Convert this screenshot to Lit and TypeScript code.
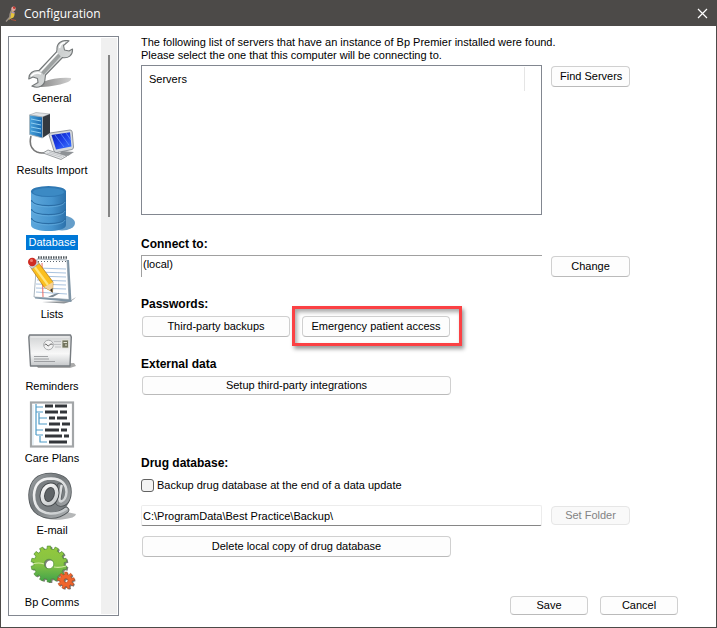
import { LitElement, html, css, svg, TemplateResult } from "lit";
import { customElement, state } from "lit/decorators.js";

function gearPath(cx: number, cy: number, outer: number, inner: number, teeth: number, hole: number): string {
  const step = (Math.PI * 2) / teeth;
  const at = (r: number, a: number) => `${(cx + r * Math.cos(a)).toFixed(2)} ${(cy + r * Math.sin(a)).toFixed(2)}`;
  let d = "";
  for (let i = 0; i < teeth; i++) {
    const a = i * step - Math.PI / 2;
    d += `${i ? "L" : "M"}${at(inner, a - step * 0.28)}L${at(outer, a - step * 0.22)}L${at(outer, a + step * 0.22)}L${at(inner, a + step * 0.28)}`;
  }
  return `${d}ZM${cx - hole} ${cy}a${hole} ${hole} 0 1 0 ${hole * 2} 0a${hole} ${hole} 0 1 0 ${-hole * 2} 0Z`;
}

const wrench = svg`
  <defs>
    <linearGradient id="w" x1="0" y1="0" x2="1" y2="1">
      <stop offset="0" stop-color="#f4f5f5"/><stop offset=".5" stop-color="#cdd0d0"/><stop offset="1" stop-color="#eceeee"/>
    </linearGradient>
    <linearGradient id="ws" x1="0" y1="0" x2="1" y2="0">
      <stop offset="0" stop-color="#777"/><stop offset="1" stop-color="#cfcfcf"/>
    </linearGradient>
  </defs>
  <path d="M3 47L15 42Q28 37 43 38Q44 41 37 43Q28 46 14 47Z" fill="url(#ws)"/>
  <path d="M41 .8C34 -.5 28.500 3 29 9.500L28.500 12L11 30.500C5 30 .5 33.500 .8 39L5 37L9.500 38.500L10 42.500L4 46C10 49 17 46 17 39L17.500 35L34.500 17.500C40 18.500 45 15.500 44.500 9L41 11L36.500 10L35.500 5.500Z" fill="url(#w)" stroke="#75797a" stroke-width="1.100" stroke-linejoin="round"/>
  <path d="M14.500 33.500L31.500 15" stroke="#9da1a1" stroke-width="3.500"/>
  <path d="M12.500 31.500L29.500 13" stroke="#fff" stroke-width="1.200"/>
  <path d="M3 36Q8 31 13 34M31.500 8Q32.500 3 37 2.500" stroke="#fff" stroke-width="1.500" fill="none"/>`;

const network = svg`
  <defs>
    <linearGradient id="scr" x1="0" y1="0" x2="1" y2="1">
      <stop offset="0" stop-color="#0a1fb0"/><stop offset=".5" stop-color="#1c3ee8"/><stop offset="1" stop-color="#3f7bff"/>
    </linearGradient>
    <linearGradient id="twr" x1="0" y1="0" x2="1" y2="0">
      <stop offset="0" stop-color="#4aa3dc"/><stop offset="1" stop-color="#1566ad"/>
    </linearGradient>
  </defs>
  <path d="M3 24Q0 36 9 40Q14 42 19 40" fill="none" stroke="#777" stroke-width="1.600"/>
  <path d="M1.500 3L8 .5L22 2L14.500 5Z" fill="#dfe3e6" stroke="#8a9096" stroke-width=".5"/>
  <path d="M14.500 5L22 2V21L14.500 26Z" fill="#34393f"/>
  <path d="M1.500 3L14.500 5V26L1.500 22.500Z" fill="url(#twr)" stroke="#aab2b8" stroke-width=".8"/>
  <path d="M3 7L13 9M3 11L13 13M3 15L13 17M3 19L13 21" stroke="#8fcdf0" stroke-width="1"/>
  <path d="M34 39L46 40L40 44L31 42Z" fill="#8e9296"/>
  <path d="M22 21L42 18Q44 18 44.200 20L45.500 35Q45.500 37 44 37.500L29 40.500Q27 41 26 39L21 23Q21 21.500 22 21Z" fill="#d5d9dc" stroke="#7c8288" stroke-width=".8"/>
  <path d="M23.500 23L42 20.200L43.500 34.500L28 37.500Z" fill="url(#scr)"/>
  <path d="M27 23L36 35M33 22L41 33M38 21L43 28" stroke="#6f9bff" stroke-width=".7"/>
  <path d="M15 41L20 38L39 44L33 47.500Z" fill="#e8eaeb" stroke="#85898d" stroke-width=".8"/>
  <path d="M19 41L34 45.500M21 40L36 44.500" stroke="#a9adb1" stroke-width=".6"/>`;

const database = svg`
  <defs>
    <linearGradient id="cyl" x1="0" y1="0" x2="1" y2="0">
      <stop offset="0" stop-color="#5ea8dc"/><stop offset=".6" stop-color="#4593cd"/><stop offset="1" stop-color="#2c71ab"/>
    </linearGradient>
  </defs>
  <ellipse cx="34" cy="39" rx="13" ry="7.500" fill="#3f86bd" opacity=".8"/>
  <path d="M3 7V41C3 49 38 49 38 41V7Z" fill="url(#cyl)"/>
  <ellipse cx="20.500" cy="7.500" rx="17.500" ry="5.500" fill="#2f78b3"/>
  <ellipse cx="20.500" cy="8" rx="15.500" ry="4" fill="#3c8ac4"/>
  <path d="M3.500 16C4 23.500 37 23.500 37.500 16M3.500 25C4 32.500 37 32.500 37.500 25M3.500 34C4 41.500 37 41.500 37.500 34" fill="none" stroke="#2a6da5" stroke-width="1.200"/>
  <path d="M4 18C6 24.500 35 24.500 37 18M4 27C6 33.500 35 33.500 37 27M4 36C6 42.500 35 42.500 37 36" fill="none" stroke="#6db3e2" stroke-width=".6"/>`;

const notepad = svg`
  <path d="M14 46L42 45L48 41Q44 46 36 47.500Z" fill="#8f9498"/>
  <path d="M10 3L41 4L43.500 46L7 42.500Z" fill="#7f95a6"/>
  <path d="M9 3L39 4L41 43.500L6 41Z" fill="#fff" stroke="#8797a3" stroke-width=".7"/>
  <path d="M10 12L38 13M10 16L38 17M9 20L38 21M9 24L38 25M8 28L38 29M8 32L38 33M8 36L39 38" stroke="#a9c3df" stroke-width="1"/>
  <path d="M14 7L15 41" stroke="#ef6a61" stroke-width="1"/>
  <path d="M10 1.500H40" stroke="#555d63" stroke-width="2.500" stroke-dasharray="1.500 1"/>
  <path d="M10 5.500H39" stroke="#5c666e" stroke-width="1.200" stroke-dasharray="1 2"/>
  <path d="M20 41Q27 37 32 37L25 41Z" fill="#7d8a94"/>
  <path d="M3 12L10 6L25 26L24.500 36L16 31Z" fill="#fbbf1d" stroke="#ad7310" stroke-width=".7"/>
  <path d="M6 10L20 29" stroke="#ffe47a" stroke-width="2.200"/>
  <path d="M16 31L20 29L25 26L24.500 36Z" fill="#f3d29b"/>
  <path d="M22 34L24.500 32L24.500 37Z" fill="#333"/>
  <path d="M1.500 10.500L8.500 4.500L11 7.500L4 13Z" fill="#c9cfd4" stroke="#777" stroke-width=".4"/>
  <circle cx="4.200" cy="6" r="4.200" fill="#cf2b22"/><circle cx="3.500" cy="4.500" r="1.500" fill="#ee7b6f"/>`;

const envelope = svg`
  <defs>
    <linearGradient id="env" x1="0" y1="0" x2="0" y2="1">
      <stop offset="0" stop-color="#d0d2d3"/><stop offset=".6" stop-color="#f8f8f8"/><stop offset="1" stop-color="#c5c8ca"/>
    </linearGradient>
  </defs>
  <path d="M8 37L46 35L48 38L42 40H10Z" fill="#aaa"/>
  <path d="M1.500 7H42.500L43.300 9L42 38H2.500L.8 9Z" fill="url(#env)" stroke="#777c80" stroke-width="1.400" stroke-linejoin="round"/>
  <path d="M2.500 9H41.500" stroke="#f2f2f2" stroke-width="1"/>
  <path d="M26 13.500H33M26 16.500H33M27 19H33" stroke="#b0b2b4" stroke-width=".7"/>
  <circle cx="20.500" cy="17" r="4.800" fill="#f1f1f1" stroke="#8b8e90" stroke-width=".7"/>
  <path d="M16.500 17Q18 15 19 17T21.500 17T24.500 16.500" stroke="#666" stroke-width="1" fill="none"/>
  <rect x="34" y="12" width="6.500" height="8" fill="#73765f" stroke="#e4e5dc" stroke-width=".8"/>
  <path d="M35.500 14.500H39M37 17H39" stroke="#e6e6d8" stroke-width="1"/>
  <path d="M6 28.500H20M6 31H21M6 33.500H27" stroke="#96999b" stroke-width=".9"/>`;

const plans = svg`
  <rect x="3" y="2.500" width="42" height="44" fill="#fff" stroke="#a3a6a8" stroke-width="2.200"/>
  <path d="M5 5V45" stroke="#d4e6f0" stroke-width="1"/>
  <path d="M8 4V35M8 7H15M8 12H15M11 13V24H19M11 18H19M8 30H15M8 35H15M12 36V42H19" fill="none" stroke="#4f9cc7" stroke-width="1.200"/>
  <g fill="none" stroke="#33363a" stroke-width="3">
    <path d="M17 6H25M27 6H39M17 12H30M32 12H39M21 18H27M29 18H39M21 24H32M34 24H42M17 30H31M33 30H39M17 36H34M36 36H41M21 42H39"/>
  </g>`;

const atSign = svg`
  <defs>
    <linearGradient id="at" x1="0" y1="0" x2="1" y2="1">
      <stop offset="0" stop-color="#9a9fa2"/><stop offset=".4" stop-color="#72777a"/><stop offset="1" stop-color="#acb0b2"/>
    </linearGradient>
    <linearGradient id="atl" x1="0" y1="0" x2="1" y2="1">
      <stop offset="0" stop-color="#fafafa"/><stop offset="1" stop-color="#c4c8ca"/>
    </linearGradient>
  </defs>
  <path d="M12 44Q32 37 48 42Q48 46 34 47.500Q18 48.500 12 44Z" fill="#b5b7b8"/>
  <ellipse cx="22" cy="23" rx="20" ry="21" fill="#7a7f82"/>
  <g fill="none" stroke-linecap="round" stroke-linejoin="round">
    <path d="M38 38Q31 44 22 43.500Q3.500 42 3.500 23Q4.500 4 23 4Q40.500 5 40.500 20Q40 31 32.500 31.500Q29.500 31 30 27L32 14" stroke="#54595c" stroke-width="6.500"/>
    <path d="M38 38Q31 44 22 43.500Q3.500 42 3.500 23Q4.500 4 23 4Q40.500 5 40.500 20Q40 31 32.500 31.500Q29.500 31 30 27L32 14" stroke="url(#at)" stroke-width="4.800"/>
    <path d="M38 37Q31 42 22 41.500Q6 40 6 23Q7 6.500 23 6.500Q38 7 38.500 20Q38 28 33 29.500Q31 29 31.500 26L33.500 14" stroke="url(#atl)" stroke-width="2.500"/>
    <ellipse cx="21.500" cy="22.500" rx="7" ry="9.500" transform="rotate(18 21.500 22.500)" fill="#5f6467" stroke="#45494c" stroke-width="5.500"/>
    <ellipse cx="21.500" cy="22.500" rx="7" ry="9.500" transform="rotate(18 21.500 22.500)" stroke="url(#atl)" stroke-width="3.600"/>
  </g>`;

const gears = svg`
  <defs>
    <linearGradient id="gr" x1="0" y1="0" x2="0" y2="1">
      <stop offset="0" stop-color="#93c83c"/><stop offset=".5" stop-color="#86c344"/><stop offset="1" stop-color="#3fa24a"/>
    </linearGradient>
  </defs>
  <path d="${gearPath(22.5, 21, 18, 15.5, 14, 4.5)}" fill="#7b807a" fill-rule="evenodd"/>
  <path d="${gearPath(21, 20, 18, 15.2, 14, 4.8)}" fill="url(#gr)" stroke="#4f8f37" stroke-width=".7" fill-rule="evenodd"/>
  <path d="M4.500 20Q11 18 16 20M26 23Q32 24 38 22" stroke="#cfe89e" stroke-width="1.200" fill="none"/>
  <path d="${gearPath(39, 37.5, 8.5, 6.5, 9, 1.5)}" fill="#777" fill-rule="evenodd"/>
  <path d="${gearPath(38, 36.5, 8.5, 6.2, 9, 2)}" fill="#f0652c" stroke="#b84a1f" stroke-width=".6" fill-rule="evenodd"/>`;

interface Section {
  name: string;
  icon: TemplateResult<2>;
}

const sections: Section[] = [
  { name: "General", icon: wrench },
  { name: "Results Import", icon: network },
  { name: "Database", icon: database },
  { name: "Lists", icon: notepad },
  { name: "Reminders", icon: envelope },
  { name: "Care Plans", icon: plans },
  { name: "E-mail", icon: atSign },
  { name: "Bp Comms", icon: gears },
];

@customElement("app-root")
export class AppRoot extends LitElement {
  @state() private selected = "Database";

  static styles = css`
    :host {
      display: flex;
      flex-direction: column;
      box-sizing: border-box;
      min-height: 100vh;
      border: 1px solid #4c4a48;
      background: #fff;
      color: #000;
      font: 11px/13px "Liberation Sans", Arial, sans-serif;
    }
    * { box-sizing: border-box; }
    button, input {
      font: inherit;
      color: inherit;
      margin: 0;
    }
    .titlebar {
      display: flex;
      align-items: center;
      height: 25px;
      padding: 0 8px 0 3px;
      gap: 4px;
      background: #4c4a48;
      color: #fff;
    }
    .logo { width: 16px; height: 16px; }
    .title {
      flex: 1;
      margin: 0;
      font: 12px/16px "Open Sans", "Noto Sans", sans-serif;
    }
    .close {
      display: flex;
      padding: 0;
      border: 0;
      background: none;
    }
    .body {
      flex: 1;
      display: flex;
      gap: 22px;
      padding: 10px 38px 11px 7px;
    }
    .sidebar {
      flex: none;
      display: flex;
      justify-content: space-between;
      width: 111px;
      padding: 1px;
      border: 1px solid #828790;
    }
    .items {
      display: flex;
      flex-direction: column;
      gap: 6px;
      width: 84px;
      margin: 0;
      padding: 2px 0 0;
      list-style: none;
    }
    .item {
      display: flex;
      flex-direction: column;
      align-items: center;
      gap: 3px;
      width: 100%;
      padding: 0;
      border: 0;
      background: none;
      white-space: nowrap;
    }
    .item svg { width: 48px; height: 48px; }
    .name { padding: 1px 2px; }
    .item[aria-current="true"] .name { background: #0078d7; color: #fff; }
    .track {
      width: 16px;
      background: #f0f0f0;
      padding: 17px 7px;
    }
    .thumb {
      width: 2px;
      height: 162px;
      background: #858585;
    }
    .main {
      flex: 1;
      display: flex;
      flex-direction: column;
    }
    .intro { margin: 0 0 3px; }
    .row {
      display: grid;
      grid-template-columns: minmax(0, 1fr) 79px;
      column-gap: 9px;
      align-items: start;
      padding-right: 48px;
    }
    .servers {
      height: 150px;
      padding: 1px;
      border: 1px solid #828790;
    }
    table {
      width: 100%;
      border-collapse: collapse;
    }
    th {
      height: 24px;
      padding: 0 6px;
      font-weight: 400;
      text-align: left;
    }
    .name-col { border-right: 1px solid #e5e5e5; }
    .fill-col { width: 16px; padding: 0; }
    .heading {
      display: block;
      margin: 0;
      font: bold 12px/14px "Liberation Sans", Arial, sans-serif;
    }
    .btn {
      height: 21px;
      padding: 0 8px;
      border: 1px solid #d0d0d0;
      border-bottom-color: #bababa;
      border-radius: 4px;
      background: #fdfdfd;
      white-space: nowrap;
    }
    .btn:disabled {
      color: #838383;
      border-color: #e6e6e6;
      background: #f9f9f9;
    }
    .slim { height: 19px; }
    .beside { margin-top: 1px; }
    .group { margin: 22px 0 4px; }
    .near { margin-top: 20px; }
    .far { margin-top: 61px; }
    .field {
      width: 100%;
      height: 22px;
      padding: 0 1px;
      border: 0;
      border-radius: 0;
      background: #fff;
      outline: none;
    }
    .sunken {
      padding-bottom: 6px;
      border-top: 1px solid #a0a0a0;
      border-left: 1px solid #a0a0a0;
    }
    .flat {
      height: 21px;
      border: 1px solid #ececec;
      border-bottom-color: #868686;
      border-radius: 2px;
    }
    .buttons {
      display: flex;
      gap: 12px;
      margin: 5px 0 0 1px;
    }
    .row + .buttons { margin-top: 10px; }
    .half { width: 148px; }
    .wide { width: 309px; }
    .marked { position: relative; display: flex; }
    .marked::after {
      content: "";
      position: absolute;
      inset: -10px -12px -9px -10px;
      border: 3px solid #fb4144;
      box-shadow: 2px 3px 4px rgba(0, 0, 0, 0.4), inset 2px 3px 4px rgba(0, 0, 0, 0.35);
      pointer-events: none;
    }
    .check {
      display: flex;
      align-items: center;
      gap: 3px;
      margin: 9px 0 13px;
    }
    .check input {
      appearance: none;
      width: 13px;
      height: 13px;
      border: 1px solid #626262;
      border-radius: 3px;
      background: #f3f3f3;
    }
    .footer {
      display: flex;
      justify-content: flex-end;
      gap: 12px;
      margin-top: auto;
      padding-bottom: 1px;
    }
    .footer .btn { width: 78px; }
  `;

  render() {
    return html`
      <header class="titlebar">
        <svg class="logo" viewBox="0 0 16 16" aria-hidden="true">
          <path d="M8 4Q11 6 10.500 9Q10 12 7 12.500L4.500 14Q5 11 6.500 9Z" fill="#e5c43c"/>
          <path d="M8.500 3Q5.500 8 6 11L2 15.500" stroke="#9b8f86" stroke-width="1.500" fill="none"/>
          <circle cx="9.500" cy="2.800" r="2.200" fill="#e2a7a0"/>
          <path d="M9 .5L11.500 1L11 3L9 2.500Z" fill="#c8372f"/>
          <path d="M8 6L10.500 7" stroke="#a58abf" stroke-width="1.500"/>
          <path d="M7 13.500L12 14.500" stroke="#b0533c" stroke-width="1"/>
        </svg>
        <h1 class="title">Configuration</h1>
        <button class="close" aria-label="Close">
          <svg width="11" height="11" viewBox="0 0 11 11"><path d="M1 1L10 10M10 1L1 10" stroke="#fff" stroke-width="1.200"/></svg>
        </button>
      </header>
      <div class="body">
        <nav class="sidebar" aria-label="Sections">
          <ul class="items">
            ${sections.map(
              (s) => html`<li>
                <button class="item" aria-current=${this.selected === s.name ? "true" : "false"} @click=${() => (this.selected = s.name)}>
                  <svg viewBox="0 0 48 48" aria-hidden="true">${s.icon}</svg>
                  <span class="name">${s.name}</span>
                </button>
              </li>`
            )}
          </ul>
          <div class="track"><div class="thumb"></div></div>
        </nav>
        <main class="main">
          <p class="intro">
            The following list of servers that have an instance of Bp Premier installed were found.<br />
            Please select the one that this computer will be connecting to.
          </p>
          <div class="row">
            <div class="servers">
              <table>
                <thead><tr><th class="name-col" scope="col">Servers</th><td class="fill-col"></td></tr></thead>
              </table>
            </div>
            <button class="btn beside">Find Servers</button>
          </div>

          <label class="heading group" for="server">Connect to:</label>
          <div class="row">
            <input id="server" class="field sunken" .value=${"(local)"} />
            <button class="btn beside">Change</button>
          </div>

          <h2 class="heading near">Passwords:</h2>
          <div class="buttons">
            <button class="btn half">Third-party backups</button>
            <div class="marked"><button class="btn half">Emergency patient access</button></div>
          </div>

          <h2 class="heading near">External data</h2>
          <div class="buttons"><button class="btn slim wide">Setup third-party integrations</button></div>

          <h2 class="heading far">Drug database:</h2>
          <label class="check"><input type="checkbox" />Backup drug database at the end of a data update</label>
          <div class="row">
            <input class="field flat" aria-label="Backup folder" .value=${"C:\\ProgramData\\Best Practice\\Backup\\"} />
            <button class="btn slim beside" disabled>Set Folder</button>
          </div>
          <div class="buttons"><button class="btn wide">Delete local copy of drug database</button></div>

          <div class="footer">
            <button class="btn slim">Save</button>
            <button class="btn slim">Cancel</button>
          </div>
        </main>
      </div>
    `;
  }
}
